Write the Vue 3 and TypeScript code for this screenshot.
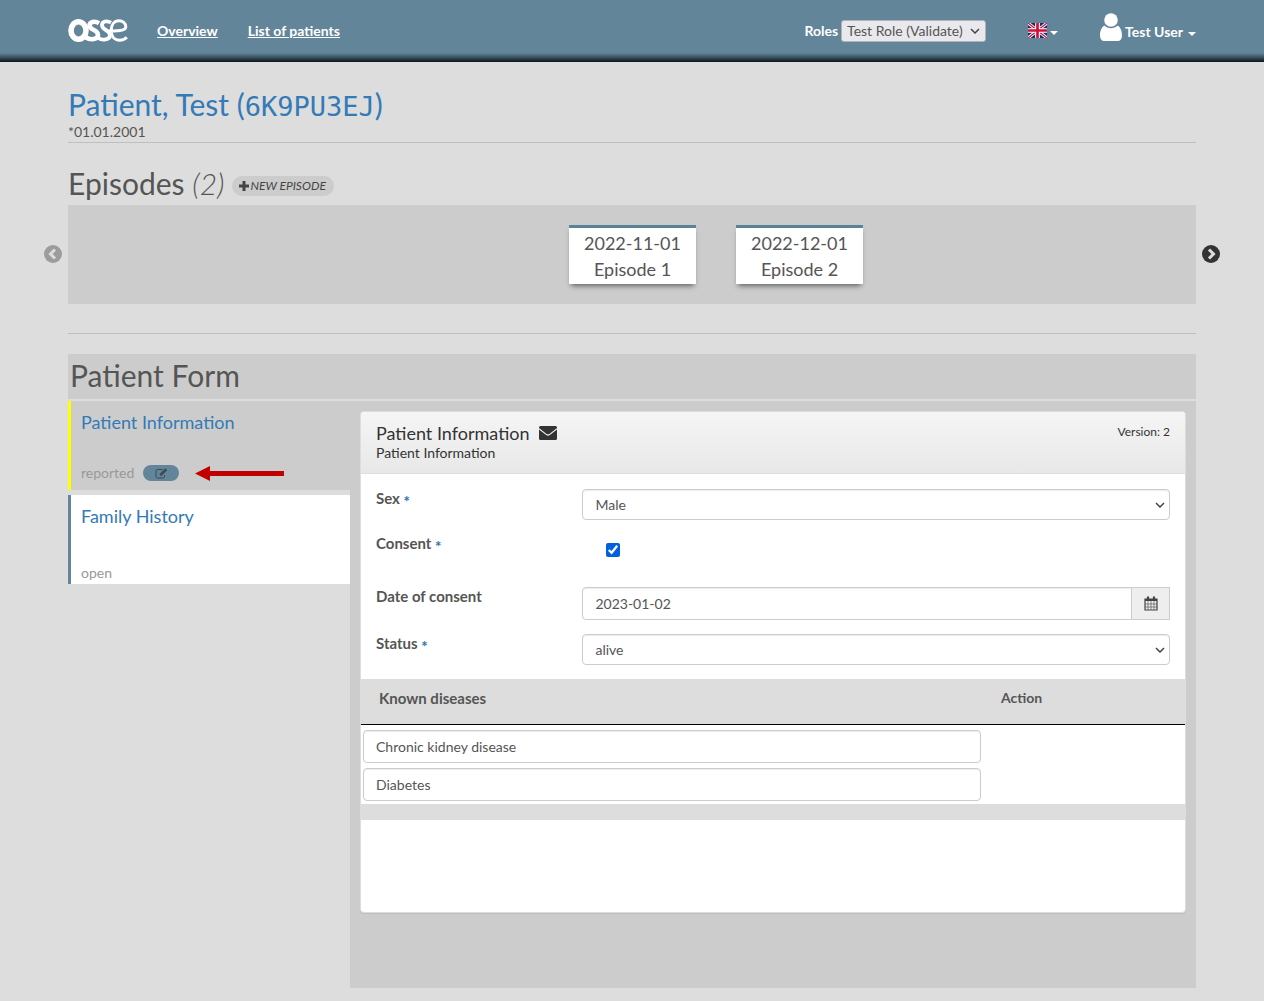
<script setup lang="ts">
import { ref } from 'vue'

interface Episode {
  date: string
  name: string
}

const episodes: Episode[] = [
  { date: '2022-11-01', name: 'Episode 1' },
  { date: '2022-12-01', name: 'Episode 2' },
]

const role = ref('Test Role (Validate)')
const sex = ref('Male')
const consent = ref(true)
const consentDate = ref('2023-01-02')
const status = ref('alive')
const diseases = ref<string[]>(['Chronic kidney disease', 'Diabetes'])
</script>

<template>
  <div class="page">
    <header class="topbar">
      <a class="logo" href="#" aria-label="osse">
        <svg width="60" height="23" viewBox="0 0 60 23" fill="none" stroke="#fff">
          <ellipse cx="10.500" cy="11.500" rx="7.500" ry="8.700" stroke-width="5.600" />
          <path d="M31 4.200C27 1.800 21.500 2.500 21.500 6.500C21.500 11.500 30 10 30 16C30 20.500 22.500 21.500 18 18.500" stroke-width="4.600" />
          <path d="M43 3.600C39 1.200 34 2.200 34 6.300C34 11.500 42 10.500 42 16.200C42 21 34 21.800 30.500 19" stroke-width="3.800" />
          <path d="M41 11.800C48 12.200 57.800 12.200 57.800 7.800C57.800 4 54.500 1.800 51 1.800C46 1.800 43.200 6 43.200 11.500C43.200 17.500 46.500 21.200 51.500 21.200C54.500 21.200 57 20.200 58.800 18.200" stroke-width="3" />
        </svg>
      </a>
      <nav class="nav">
        <a href="#">Overview</a>
        <a href="#">List of patients</a>
      </nav>
      <div class="roles">
        <label for="role">Roles</label>
        <select id="role" v-model="role" class="role-select">
          <option>Test Role (Validate)</option>
        </select>
      </div>
      <button class="menu lang" type="button" aria-label="Language">
        <svg width="19" height="15" viewBox="0 0 57 45">
          <rect width="57" height="45" fill="#1b2a6b" />
          <path d="M0 0L57 45M57 0L0 45" stroke="#fff" stroke-width="9" />
          <path d="M0 0L57 45M57 0L0 45" stroke="#d0103a" stroke-width="4" />
          <path d="M28.500 0V45M0 22.500H57" stroke="#fff" stroke-width="14" />
          <path d="M28.500 0V45M0 22.500H57" stroke="#d0103a" stroke-width="8" />
        </svg>
        <span class="caret"></span>
      </button>
      <button class="menu user" type="button">
        <svg width="22" height="28" viewBox="0 0 22 28" fill="#fff">
          <circle cx="11" cy="7" r="6.800" />
          <path d="M4.500 12.500C1.500 14 0 18 0 22.500C0 26 1.500 28 4.500 28H17.500C20.500 28 22 26 22 22.500C22 18 20.500 14 17.500 12.500C14 16 8 16 4.500 12.500Z" />
        </svg>
        <span class="user-name">Test User</span>
        <span class="caret"></span>
      </button>
    </header>

    <main class="container">
      <section class="patient">
        <h1><a href="#">Patient, Test (<span class="pid">6K9PU3EJ</span>)</a></h1>
        <p>*01.01.2001</p>
      </section>

      <section class="episodes">
        <div class="episodes-head">
          <h2>Episodes <em>({{ episodes.length }})</em></h2>
          <button class="new-episode" type="button">
            <svg width="10" height="10" viewBox="0 0 10 10"><path d="M5 0V10M0 5H10" stroke="#444" stroke-width="3" /></svg>
            NEW EPISODE
          </button>
        </div>
        <div class="carousel">
          <button class="arrow" type="button" aria-label="Previous" disabled>
            <svg width="18" height="18" viewBox="0 0 18 18">
              <circle cx="9" cy="9" r="9" fill="#9c9c9c" />
              <path d="M11 4.500L6.500 9L11 13.500" fill="none" stroke="#ddd" stroke-width="3" />
            </svg>
          </button>
          <div class="track">
            <a v-for="e in episodes" :key="e.name" class="card" href="#">
              <span>{{ e.date }}</span>
              <span>{{ e.name }}</span>
            </a>
          </div>
          <button class="arrow" type="button" aria-label="Next">
            <svg width="18" height="18" viewBox="0 0 18 18">
              <circle cx="9" cy="9" r="9" fill="#333" />
              <path d="M7 4.500L11.500 9L7 13.500" fill="none" stroke="#ddd" stroke-width="3" />
            </svg>
          </button>
        </div>
      </section>

      <hr />

      <section>
        <h2 class="form-title">Patient Form</h2>
        <div class="form-area">
          <aside class="sidebar">
            <div class="form-item active">
              <a href="#">Patient Information</a>
              <div class="state">
                <span>reported</span>
                <button class="edit" type="button" aria-label="Edit">
                  <svg width="13" height="11" viewBox="0 0 13 11" fill="none" stroke="#3c4a54">
                    <path d="M7.500 1.500H2.500Q1 1.500 1 3V8.500Q1 10 2.500 10H8Q9.500 10 9.500 8.500V7" />
                    <path d="M5.200 7.300L11.300 1.300" stroke-width="2.600" />
                  </svg>
                </button>
                <svg class="pointer" width="89" height="15" viewBox="0 0 89 15" fill="#c00000">
                  <path d="M0 7.500L15 0V5H89V10H15V15Z" />
                </svg>
              </div>
            </div>
            <div class="form-item">
              <a href="#">Family History</a>
              <div class="state"><span>open</span></div>
            </div>
          </aside>

          <div class="content">
            <form class="panel" @submit.prevent>
              <div class="panel-head">
                <div>
                  <h3>
                    Patient Information
                    <svg width="18" height="14" viewBox="0 0 18 14">
                      <rect width="18" height="14" rx="1.500" fill="#333" />
                      <path d="M0 2.800L7.500 8.600Q9 9.600 10.500 8.600L18 2.800" fill="none" stroke="#eee" stroke-width="1.200" />
                    </svg>
                  </h3>
                  <p>Patient Information</p>
                </div>
                <span class="version">Version: 2</span>
              </div>

              <div class="fields">
                <div class="row">
                  <label for="sex">Sex <i>*</i></label>
                  <select id="sex" v-model="sex" class="control select">
                    <option>Male</option>
                    <option>Female</option>
                  </select>
                </div>
                <div class="row row-check">
                  <label for="consent">Consent <i>*</i></label>
                  <input id="consent" v-model="consent" type="checkbox" />
                </div>
                <div class="row">
                  <label for="date">Date of consent</label>
                  <div class="date-group">
                    <input id="date" v-model="consentDate" type="text" class="control" />
                    <button type="button" aria-label="Open calendar">
                      <svg width="14" height="15" viewBox="0 0 14 15" fill="none" stroke="#444">
                        <path d="M1 3H13V14H1Z" stroke-width="1.200" />
                        <path d="M1 4H13" stroke-width="2" />
                        <path d="M4 0.500V4M10 0.500V4" stroke-width="2.200" />
                        <path d="M1 8H13M1 11H13M4 5V14M7 5V14M10 5V14" stroke-width="0.600" />
                      </svg>
                    </button>
                  </div>
                </div>
                <div class="row">
                  <label for="status">Status <i>*</i></label>
                  <select id="status" v-model="status" class="control select">
                    <option>alive</option>
                    <option>deceased</option>
                  </select>
                </div>
              </div>

              <table class="diseases">
                <thead>
                  <tr>
                    <th>Known diseases</th>
                    <th class="action">Action</th>
                  </tr>
                </thead>
                <tbody>
                  <tr v-for="(d, i) in diseases" :key="i">
                    <td><input v-model="diseases[i]" type="text" class="control" :aria-label="'Disease ' + (i + 1)" /></td>
                    <td></td>
                  </tr>
                </tbody>
              </table>
              <div class="table-foot"></div>
            </form>
          </div>
        </div>
      </section>
    </main>
  </div>
</template>

<style>
body {
  margin: 0;
  background: #ddd;
}
</style>

<style scoped>
* {
  box-sizing: border-box;
}
.page {
  font: 14px/20px Lato, 'Liberation Sans', sans-serif;
  color: #555;
}
a {
  color: #337ab7;
  text-decoration: none;
}
h1, h2, h3, p {
  margin: 0;
  font-weight: 400;
}
button, input, select {
  font: inherit;
  color: inherit;
  margin: 0;
}
button {
  border: 0;
  padding: 0;
  background: none;
}
svg {
  display: block;
  flex: none;
}

/* Top bar */
.topbar {
  display: flex;
  align-items: center;
  height: 62px;
  padding: 0 68px;
  background: linear-gradient(#62859a 53px, #3d5564 57px, #15212b 61px);
  border-bottom: 1px solid #15181f;
  color: #fff;
  font-weight: 700;
}
.nav {
  display: flex;
  gap: 30px;
  margin-left: 29px;
}
.nav a {
  color: #fff;
  text-decoration: underline;
}
.roles {
  display: flex;
  align-items: center;
  gap: 3px;
  margin-left: auto;
}
.role-select {
  appearance: none;
  width: 145px;
  height: 22px;
  padding: 0 5px;
  border: 1px solid #b5b0ba;
  border-radius: 3px;
  background: #e9e9ed url("data:image/svg+xml,%3Csvg xmlns='http://www.w3.org/2000/svg' width='10' height='6'%3E%3Cpath d='M1 1L5 5L9 1' fill='none' stroke='%23444' stroke-width='1.5'/%3E%3C/svg%3E") no-repeat right 5px center;
  color: #555;
  font-weight: 400;
}
.menu {
  display: flex;
  align-items: center;
  gap: 3px;
  color: #fff;
  font-weight: 700;
}
.lang {
  margin-left: 42px;
}
.user {
  align-items: flex-end;
  margin-left: 42px;
  height: 29px;
  margin-bottom: 7px;
}
.user svg {
  margin-bottom: 1px;
}
.user-name {
  margin-right: 2px;
}
.caret {
  width: 8px;
  height: 4px;
  border: 4px solid transparent;
  border-top-color: #fff;
  border-bottom: 0;
}
.lang .caret {
  margin-top: 4px;
}
.user .caret {
  margin-bottom: 6px;
}

.container {
  padding: 25px 68px 13px;
}
.patient {
  border-bottom: 1px solid #bfbfbf;
}
h1, h2 {
  font-size: 30px;
  line-height: 34px;
}
.pid {
  font-family: 'DejaVu Sans Mono', monospace;
  font-size: 27px;
  line-height: 30px;
}
.episodes {
  margin-top: 23px;
}
.episodes-head {
  display: flex;
  align-items: center;
  gap: 7px;
  height: 39px;
  padding-bottom: 5px;
}
.episodes-head em {
  font-weight: 300;
}
.new-episode {
  display: flex;
  align-items: center;
  gap: 2px;
  height: 20px;
  margin-top: 6px;
  padding: 0 8px 0 7px;
  border-radius: 10px;
  background: #ccc;
  font-size: 12px;
  font-style: italic;
  color: #444;
}
.carousel {
  display: flex;
  align-items: center;
  gap: 6px;
  margin: 0 -24px;
}
.arrow {
  padding-bottom: 2px;
}
.track {
  flex: 1;
  display: flex;
  gap: 40px;
  height: 99px;
  padding: 20px 0 20px calc(50% - 87px);
  background: #ccc;
}
.card {
  display: flex;
  flex-direction: column;
  align-items: center;
  width: 127px;
  border-top: 3px solid #5b8299;
  background: #fff;
  box-shadow: 0 4px 5px -2px #666;
  color: #555;
  font-size: 18px;
  line-height: 26px;
  padding-top: 2px;
}
hr {
  margin: 29px 0 20px;
  border: 0;
  border-top: 1px solid #bfbfbf;
}

/* Form area */
.form-title {
  padding: 4px 2px 7px;
  background: #ccc;
}
.form-area {
  display: flex;
  align-items: stretch;
  margin-top: 2px;
}
.sidebar {
  width: 25%;
  display: flex;
  flex-direction: column;
  gap: 5px;
}
.form-item {
  display: flex;
  flex-direction: column;
  justify-content: space-between;
  height: 89px;
  padding: 8px 10px 1px;
  border-left: 3px solid #62859a;
  background: #fff;
  font-size: 18px;
  line-height: 26px;
}
.active {
  border-color: #ff0;
  background: #ccc;
  padding-bottom: 7px;
}
.state {
  display: flex;
  align-items: center;
  font-size: 14px;
  line-height: 20px;
  color: #999;
}
.edit {
  display: flex;
  align-items: center;
  justify-content: center;
  width: 36px;
  height: 16px;
  margin-left: 9px;
  border-radius: 8px;
  background: #62859a;
}
.pointer {
  margin-left: 16px;
}
.content {
  flex: 1;
  padding: 10px 10px 75px;
  background: #ccc;
}
.panel {
  border: 1px solid #ddd;
  border-radius: 4px;
  background: #fff;
  padding-bottom: 92px;
  box-shadow: 0 1px 1px #0001;
}
.panel-head {
  display: flex;
  justify-content: space-between;
  height: 62px;
  padding: 10px 15px;
  border-bottom: 1px solid #ddd;
  border-radius: 3px 3px 0 0;
  background: linear-gradient(#f5f5f5, #e8e8e8);
  color: #333;
}
.panel-head h3 {
  display: flex;
  align-items: center;
  gap: 10px;
  font-size: 18px;
  line-height: 22px;
}
.panel-head p {
  line-height: 18px;
}
.version {
  font-size: 12px;
}
.fields {
  display: flex;
  flex-direction: column;
  gap: 14px;
  padding: 15px 15px 14px;
}
.row {
  display: grid;
  grid-template-columns: 26% 1fr;
  align-items: start;
}
.row label {
  font-size: 15px;
  line-height: 18px;
  font-weight: 700;
}
.row i {
  font-style: normal;
  font-weight: 900;
  line-height: 12px;
  vertical-align: -3px;
  color: #337ab7;
}
.row-check {
  height: 39px;
}
.row-check input {
  width: 14px;
  height: 14px;
  margin: 9px 0 0 24px;
  accent-color: #0060df;
}
.control {
  width: 100%;
  height: 33px;
  padding: 0 12px;
  border: 1px solid #ccc;
  border-radius: 4px;
  background: #fff;
  box-shadow: inset 0 1px 1px #00000013;
}
.select {
  appearance: none;
  height: 31px;
  background: #fff url("data:image/svg+xml,%3Csvg xmlns='http://www.w3.org/2000/svg' width='10' height='6'%3E%3Cpath d='M1 1L5 5L9 1' fill='none' stroke='%23444' stroke-width='1.5'/%3E%3C/svg%3E") no-repeat right 4px center;
}
.date-group {
  display: flex;
}
.date-group .control {
  flex: 1;
  border-radius: 4px 0 0 4px;
}
.date-group button {
  display: flex;
  align-items: center;
  justify-content: center;
  width: 38px;
  border: 1px solid #ccc;
  border-left: 0;
  background: #eee;
}
.diseases {
  width: 100%;
  border-spacing: 0;
  border-collapse: collapse;
}
.diseases th {
  height: 45px;
  padding: 0 18px 6px;
  border-bottom: 1px solid #000;
  background: #ddd;
  text-align: left;
  font-size: 15px;
}
.diseases .action {
  width: 202px;
  font-size: 14px;
}
.diseases td {
  padding: 2px 2px 3px;
}
.diseases tbody tr:first-child td {
  padding-top: 5px;
}
.diseases .control {
  display: block;
}
.table-foot {
  height: 16px;
  background: #ddd;
}
</style>
